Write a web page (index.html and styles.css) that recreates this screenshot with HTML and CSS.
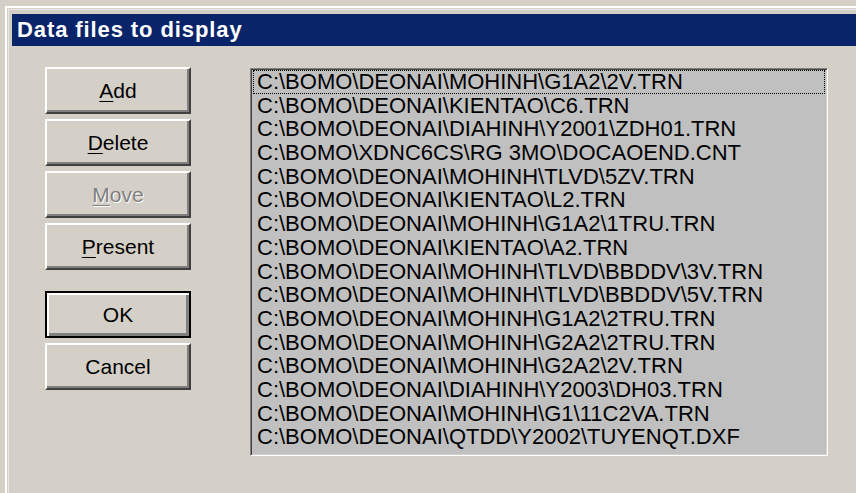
FILE: index.html
```html
<!DOCTYPE html>
<html lang="en">
<head>
<meta charset="utf-8">
<title>Data files to display</title>
<link rel="stylesheet" href="styles.css">
</head>
<body>
<div class="window">
  <div class="frame">
    <div class="titlebar">Data files to display</div>
    <div class="client">
      <div class="buttons">
        <div class="btn-group">
          <button class="btn"><u>A</u>dd</button>
          <button class="btn"><u>D</u>elete</button>
          <button class="btn disabled"><u>M</u>ove</button>
          <button class="btn"><u>P</u>resent</button>
        </div>
        <div class="btn-group">
          <button class="btn default">OK</button>
          <button class="btn">Cancel</button>
        </div>
      </div>
      <ul class="listbox">
        <li class="focused">C:\BOMO\DEONAI\MOHINH\G1A2\2V.TRN</li>
        <li>C:\BOMO\DEONAI\KIENTAO\C6.TRN</li>
        <li>C:\BOMO\DEONAI\DIAHINH\Y2001\ZDH01.TRN</li>
        <li>C:\BOMO\XDNC6CS\RG 3MO\DOCAOEND.CNT</li>
        <li>C:\BOMO\DEONAI\MOHINH\TLVD\5ZV.TRN</li>
        <li>C:\BOMO\DEONAI\KIENTAO\L2.TRN</li>
        <li>C:\BOMO\DEONAI\MOHINH\G1A2\1TRU.TRN</li>
        <li>C:\BOMO\DEONAI\KIENTAO\A2.TRN</li>
        <li>C:\BOMO\DEONAI\MOHINH\TLVD\BBDDV\3V.TRN</li>
        <li>C:\BOMO\DEONAI\MOHINH\TLVD\BBDDV\5V.TRN</li>
        <li>C:\BOMO\DEONAI\MOHINH\G1A2\2TRU.TRN</li>
        <li>C:\BOMO\DEONAI\MOHINH\G2A2\2TRU.TRN</li>
        <li>C:\BOMO\DEONAI\MOHINH\G2A2\2V.TRN</li>
        <li>C:\BOMO\DEONAI\DIAHINH\Y2003\DH03.TRN</li>
        <li>C:\BOMO\DEONAI\MOHINH\G1\11C2VA.TRN</li>
        <li>C:\BOMO\DEONAI\QTDD\Y2002\TUYENQT.DXF</li>
      </ul>
    </div>
  </div>
</div>
</body>
</html>
```
FILE: styles.css
```css
html, body {
  margin: 0;
  padding: 0;
  background: #d4d0c8;
  width: 856px;
  height: 493px;
  overflow: hidden;
  font-family: "Liberation Sans", Arial, sans-serif;
}

/* dialog window, cut by the right and bottom edges */
.window {
  margin: 6px 0 0 5px;
  width: 880px;
  height: 500px;
  border-top: 2px solid #ffffff;
  border-left: 2px solid #ffffff;
}

.frame {
  margin: 1px 0 0 1px;
  height: 100%;
  border-top: 1px solid #ebe9e3;
  border-left: 1px solid #ebe9e3;
  padding: 4px 0 0 3px;
}

.titlebar {
  height: 32px;
  line-height: 32px;
  background: #0a246a;
  color: #ffffff;
  font-weight: bold;
  font-size: 22px;
  letter-spacing: 0.9px;
  padding-left: 5px;
}

.client {
  display: flex;
  align-items: flex-start;
  padding: 21px 0 0 33px;
}

.buttons {
  width: 146px;
  display: flex;
  flex-direction: column;
  gap: 21px;
}

.btn-group {
  display: flex;
  flex-direction: column;
  gap: 5px;
}

.btn {
  box-sizing: border-box;
  width: 146px;
  height: 47px;
  margin: 0;
  padding: 0;
  background: #d4d0c8;
  font-family: "Liberation Sans", Arial, sans-serif;
  font-size: 21px;
  color: #000000;
  border-top: 2px solid #ffffff;
  border-left: 2px solid #ffffff;
  border-right: 2px solid #404040;
  border-bottom: 2px solid #404040;
  box-shadow: inset -2px -2px 0 #808080;
}

.btn u {
  text-decoration-thickness: 1px;
  text-underline-offset: 3px;
}

.btn.disabled {
  color: #808080;
  text-shadow: 1px 1px 0 #ffffff;
}

.btn.default {
  border: 2px solid #000000;
  box-shadow: inset 2px 2px 0 #ffffff, inset -3px -3px 0 #808080;
}

.listbox {
  list-style: none;
  box-sizing: border-box;
  width: 578px;
  height: 388px;
  margin: 1px 0 0 59px;
  padding: 1px;
  background: #c0c0c0;
  border-top: 1px solid #808080;
  border-left: 1px solid #808080;
  border-right: 1px solid #ffffff;
  border-bottom: 1px solid #ffffff;
  box-shadow: inset 1px 1px 0 #404040, inset -1px -1px 0 #d4d0c8;
  font-size: 22px;
  color: #000000;
}

.listbox li {
  height: 23.7px;
  line-height: 23.7px;
  padding-left: 4px;
  margin: 0 1px;
  white-space: nowrap;
}

.listbox li.focused {
  outline: 1px dotted #000000;
  outline-offset: -1px;
}
```
